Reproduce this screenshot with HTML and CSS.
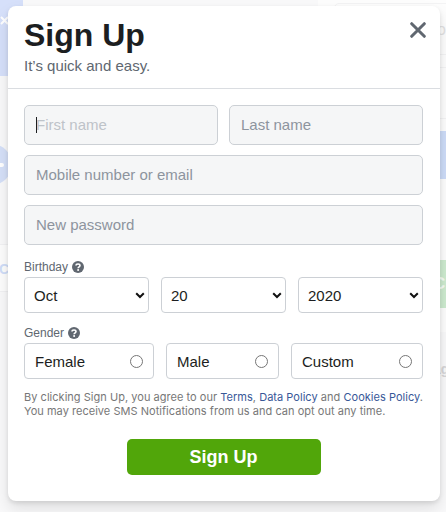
FILE: index.html
```html
<!DOCTYPE html>
<html lang="en">
<head>
  <meta charset="UTF-8">
  <meta name="viewport" content="width=device-width, initial-scale=1.0">
  <link rel="stylesheet" href="styles.css">
  <title>Sign Up</title>
</head>
<body>

<!-- Faded login page behind the dialog -->
<div class="backdrop" aria-hidden="true">
  <div class="bg-tile"><svg width="10" height="10" viewBox="0 0 10 10"><path d="M1 1l7 7M8 1l-7 7" stroke="#fff" stroke-width="2"/></svg></div>
  <div class="bg-left-card">C</div>
  <div class="bg-circle"></div>
  <div class="bg-right"></div>
  <div class="bg-field">o</div>
  <div class="bg-line"></div>
  <div class="bg-login"></div>
  <div class="bg-create">Cr</div>
  <div class="bg-page">ag</div>
</div>

<div class="dialog">
  <div class="header">
    <div>
      <h1>Sign Up</h1>
      <p>It’s quick and easy.</p>
    </div>
    <button class="close" type="button" aria-label="Close">
      <svg width="16" height="16" viewBox="0 0 16 16"><path d="M1.7 1.7L14.3 14.3M14.3 1.7L1.7 14.3" stroke="#606770" stroke-width="3" stroke-linecap="round"/></svg>
    </button>
  </div>

  <form class="form">
    <div class="names">
      <div class="first-name">
        <input class="field" type="text" placeholder="First name">
        <span class="caret"></span>
      </div>
      <input class="field" type="text" placeholder="Last name">
    </div>
    <input class="field" type="text" placeholder="Mobile number or email">
    <input class="field" type="password" placeholder="New password">

    <div class="label">Birthday
      <svg class="help" width="12" height="12" viewBox="0 0 12 12"><circle cx="6" cy="6" r="6" fill="#606770"/><path d="M4 4.6C4 2.4 8 2.4 8 4.6C8 5.8 6.1 5.8 6.1 7.2" fill="none" stroke="#fff" stroke-width="1.6"/><circle cx="6.1" cy="9.1" r="1" fill="#fff"/></svg>
    </div>
    <div class="selects">
      <div class="select">
        <select><option>Oct</option></select>
        <svg width="10" height="7" viewBox="0 0 10 7"><path d="M1.2 1.2L5 5L8.8 1.2" fill="none" stroke="#111" stroke-width="2"/></svg>
      </div>
      <div class="select">
        <select><option>20</option></select>
        <svg width="10" height="7" viewBox="0 0 10 7"><path d="M1.2 1.2L5 5L8.8 1.2" fill="none" stroke="#111" stroke-width="2"/></svg>
      </div>
      <div class="select">
        <select><option>2020</option></select>
        <svg width="10" height="7" viewBox="0 0 10 7"><path d="M1.2 1.2L5 5L8.8 1.2" fill="none" stroke="#111" stroke-width="2"/></svg>
      </div>
    </div>

    <div class="label">Gender
      <svg class="help" width="12" height="12" viewBox="0 0 12 12"><circle cx="6" cy="6" r="6" fill="#606770"/><path d="M4 4.6C4 2.4 8 2.4 8 4.6C8 5.8 6.1 5.8 6.1 7.2" fill="none" stroke="#fff" stroke-width="1.6"/><circle cx="6.1" cy="9.1" r="1" fill="#fff"/></svg>
    </div>
    <div class="genders">
      <label class="gender">Female <input type="radio" name="gender"></label>
      <label class="gender">Male <input type="radio" name="gender"></label>
      <label class="gender">Custom <input type="radio" name="gender"></label>
    </div>

    <p class="terms">
      By clicking Sign Up, you agree to our <a href="#">Terms</a>, <a href="#">Data Policy</a> and <a href="#">Cookies Policy</a>.<br>
      You may receive SMS Notifications from us and can opt out any time.
    </p>

    <button class="submit" type="button">Sign Up</button>
  </form>
</div>

</body>
</html>
```
FILE: styles.css
```css
* {
  box-sizing: border-box;
}

body {
  margin: 0;
  height: 512px;
  padding: 6px 6px 11px 8px;
  overflow: hidden;
  background-color: #f9f9fa;
  font-family: "Liberation Sans", Arial, sans-serif;
}

/* page behind the dialog */
.backdrop {
  position: absolute;
  inset: 0;
  overflow: hidden;
}

.backdrop div {
  position: absolute;
}

.bg-tile {
  left: -10px;
  top: -10px;
  width: 33px;
  height: 86px;
  padding: 24px 0 0 10px;
  border-radius: 5px;
  background-color: #d6e0fa;
}

.bg-tile svg {
  display: block;
  margin-top: 2px;
}

.bg-left-card {
  left: -3px;
  top: 244px;
  width: 30px;
  height: 48px;
  padding-left: 1px;
  border: 1px solid #f1f1f3;
  background-color: #fdfdfd;
  color: #d0ddf8;
  font-size: 14px;
  font-weight: bold;
  line-height: 48px;
}

.bg-circle {
  left: -29px;
  top: 144px;
  width: 41px;
  height: 41px;
  border-radius: 50%;
  background-color: #d5e0f8;
}

.bg-circle::after {
  content: "";
  position: absolute;
  left: 27px;
  top: 19px;
  width: 6px;
  height: 4px;
  border-radius: 2px;
  background-color: #fff;
}

.bg-right {
  left: 318px;
  top: 0;
  width: 140px;
  height: 332px;
  background-color: #fdfdfd;
}

.bg-field {
  left: 334px;
  top: 3px;
  width: 130px;
  height: 52px;
  padding-left: 102px;
  border: 1px solid #f3f3f4;
  border-radius: 5px;
  color: #e2e2e3;
  font-size: 16px;
  line-height: 52px;
}

.bg-line {
  left: 334px;
  top: 67px;
  width: 130px;
  height: 52px;
  border: 1px solid #f3f3f4;
  border-radius: 5px;
}

.bg-login {
  left: 334px;
  top: 131px;
  width: 130px;
  height: 48px;
  background-color: #cddcf8;
}

.bg-create {
  left: 380px;
  top: 260px;
  width: 80px;
  height: 48px;
  padding-left: 53px;
  background-color: #cdebcf;
  color: #f4fbf4;
  font-size: 17px;
  font-weight: bold;
  line-height: 48px;
}

.bg-page {
  left: 433px;
  top: 361px;
  color: #d6d6d8;
  font-size: 14px;
  font-weight: bold;
}

.dialog {
  position: relative;
  width: 432px;
  height: 495px;
  border-radius: 8px;
  background-color: #fff;
  box-shadow: 0 2px 4px rgba(0, 0, 0, 0.1), 0 8px 16px rgba(0, 0, 0, 0.1);
}

.header {
  display: flex;
  justify-content: space-between;
  height: 83px;
  padding: 10px 14px 0 16px;
  border-bottom: 1px solid #dadde1;
}

.header h1 {
  margin: 0;
  color: #1c1e21;
  font-size: 32px;
  line-height: 38px;
}

.header p {
  margin: 0;
  color: #606770;
  font-size: 15px;
  line-height: 24px;
}

.close {
  display: flex;
  align-self: flex-start;
  margin-top: 6px;
  padding: 0;
  border: none;
  background: none;
}

.form {
  display: flex;
  flex-direction: column;
  padding: 16px 17px 0 16px;
}

.names {
  display: grid;
  grid-template-columns: 1fr 1fr;
  gap: 11px;
}

.field {
  width: 100%;
  height: 40px;
  margin: 0 0 10px;
  padding: 0 11px 2px;
  border: 1px solid #ccd0d5;
  border-radius: 5px;
  background-color: #f5f6f7;
  font-family: inherit;
  font-size: 15px;
}

.field::placeholder {
  color: #8d949e;
}

.first-name {
  position: relative;
}

.first-name .field::placeholder {
  color: #bec3c9;
}

.caret {
  position: absolute;
  left: 12px;
  top: 12px;
  width: 1px;
  height: 16px;
  background-color: #1c1e21;
}

.label {
  display: flex;
  align-items: center;
  gap: 4px;
  height: 16px;
  margin: 4px 0 2px;
  color: #606770;
  font-size: 12px;
}

.selects {
  display: grid;
  grid-template-columns: repeat(3, 1fr);
  gap: 12px;
  margin-bottom: 8px;
}

.select {
  position: relative;
  display: flex;
}

.select select {
  width: 100%;
  height: 36px;
  padding: 0 9px;
  border: 1px solid #ccd0d5;
  border-radius: 4px;
  background-color: #fff;
  color: #1c1e21;
  font-family: inherit;
  font-size: 15px;
  appearance: none;
}

.select svg {
  position: absolute;
  right: 4px;
  top: 15px;
}

.genders {
  display: grid;
  grid-template-columns: 130px 113px 132px;
  gap: 12px;
}

.gender {
  display: flex;
  align-items: center;
  justify-content: space-between;
  height: 36px;
  padding: 0 10px;
  border: 1px solid #ccd0d5;
  border-radius: 4px;
  color: #1c1e21;
  font-size: 15px;
}

.gender input {
  width: 13px;
  height: 13px;
  margin: 1px 0 0;
  border: 1px solid #767676;
  border-radius: 50%;
  appearance: none;
}

.terms {
  margin: 11px 0 0;
  color: #777;
  font-family: Inter, sans-serif;
  font-size: 11px;
  line-height: 14px;
  letter-spacing: 0.03px;
  white-space: nowrap;
}

.terms a {
  color: #385898;
  text-decoration: none;
}

.submit {
  align-self: center;
  width: 194px;
  height: 36px;
  margin-top: 21px;
  border: none;
  border-radius: 5px;
  background-color: #51a60a;
  color: #fff;
  font-family: inherit;
  font-size: 18px;
  font-weight: bold;
}
```
